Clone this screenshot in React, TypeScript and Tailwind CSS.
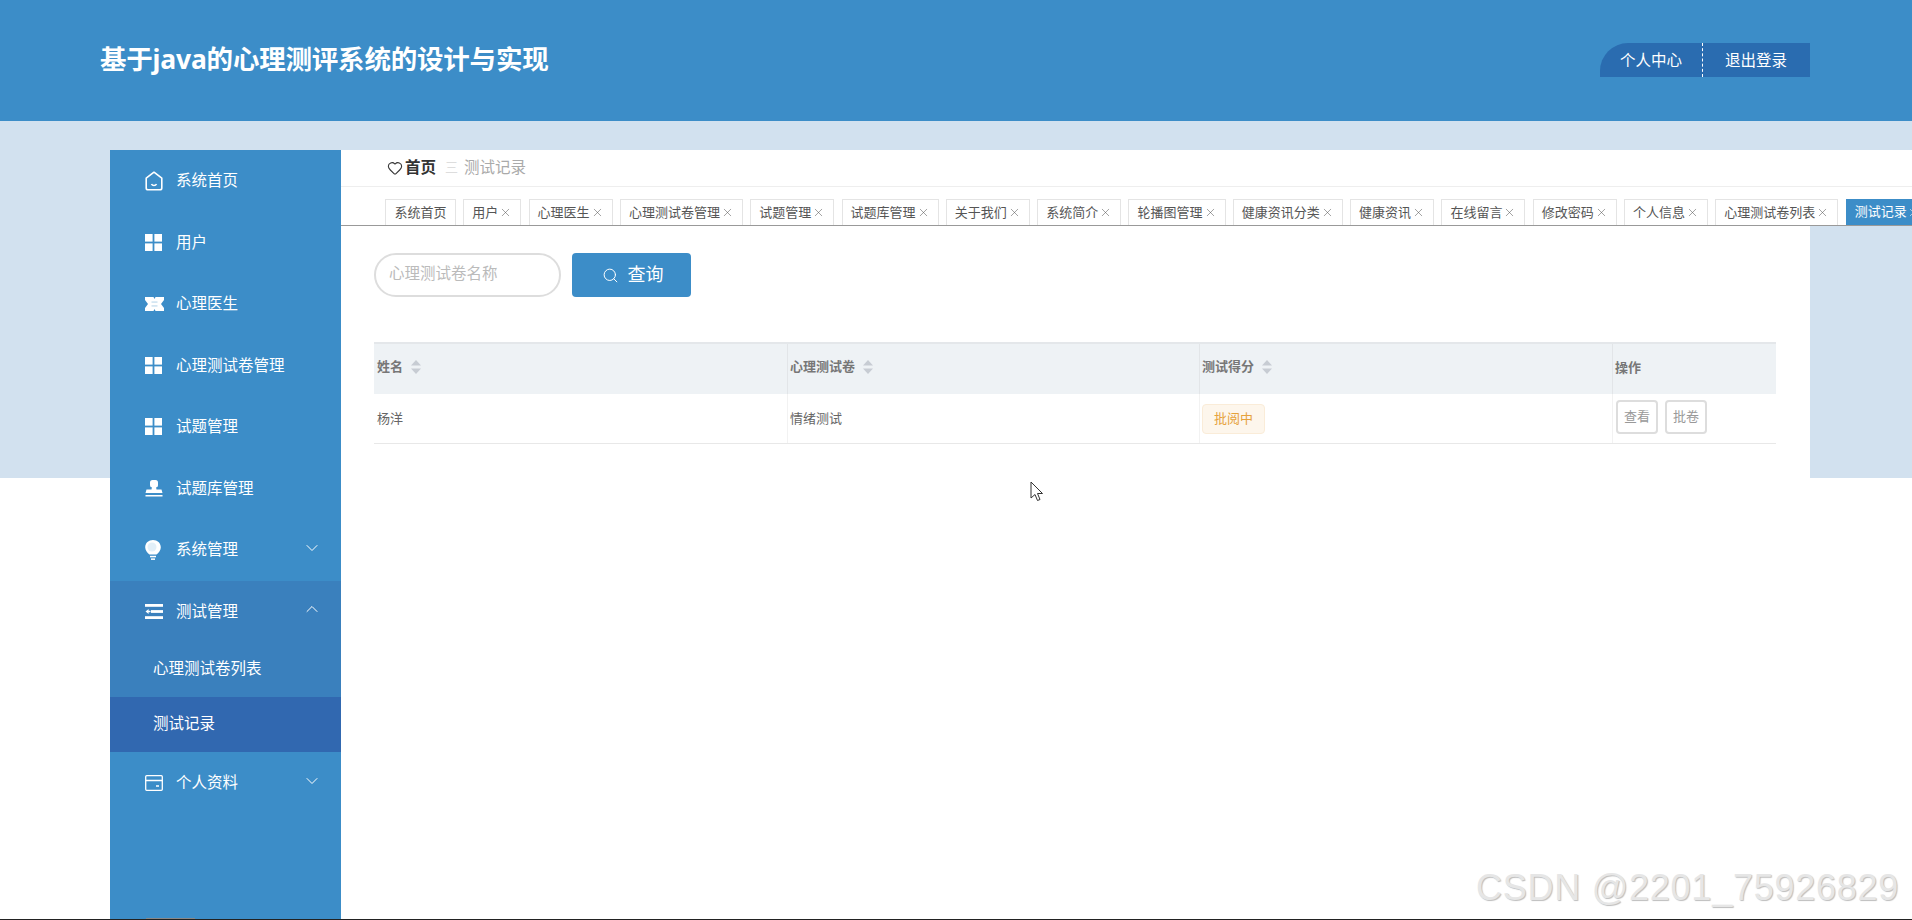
import React from 'react';
import { ChevronDown, ChevronUp, Heart, Search, X } from 'lucide-react';

const GridIcon = () => (
  <svg width="17" height="17" viewBox="0 0 17 17" fill="white">
    <rect x="0" y="0" width="7.6" height="7.6" />
    <rect x="9.4" y="0" width="7.6" height="7.6" />
    <rect x="0" y="9.4" width="7.6" height="7.6" />
    <rect x="9.4" y="9.4" width="7.6" height="7.6" />
  </svg>
);

const HomeIcon = () => (
  <svg width="18" height="20" viewBox="0 0 18 20" fill="none" stroke="white" strokeWidth="1.6">
    <path d="M9 1.2 L16.8 7.2 V17 Q16.8 18.8 15 18.8 H3 Q1.2 18.8 1.2 17 V7.2 Z" strokeLinejoin="round" />
    <path d="M6.5 13 C7.5 15 10.5 15 11.5 13" />
  </svg>
);

const TicketIcon = () => (
  <svg width="19" height="14" viewBox="0 0 19 14" fill="white">
    <path d="M0 0 H19 V3 L16 7 L19 11 V14 H0 V11 L3 7 L0 3 Z" />
    <path d="M8.5 0 H10.5 L9.5 2 Z M8.5 14 H10.5 L9.5 12 Z" fill="#3c8dc8" />
    <rect x="6.5" y="4.6" width="6" height="0.9" fill="#a9cde6" />
    <rect x="6.5" y="8.5" width="6" height="0.9" fill="#a9cde6" />
  </svg>
);

const StampIcon = () => (
  <svg width="18" height="17" viewBox="0 0 18 17" fill="white">
    <rect x="5" y="0" width="8" height="7.5" rx="2.5" />
    <path d="M7 7 H11 L11.5 9.5 H16.5 L17.5 13 H0.5 L1.5 9.5 H6.5 Z" />
    <rect x="0.5" y="15" width="17" height="1.5" />
  </svg>
);

const BulbIcon = () => (
  <svg width="16" height="20" viewBox="0 0 16 20" fill="white">
    <path d="M8 0 C12.4 0 15.8 3 15.8 7.4 C15.8 10.4 13.5 12.6 11.5 14.6 H4.5 C2.5 12.6 0.2 10.4 0.2 7.4 C0.2 3 3.6 0 8 0 Z" />
    <ellipse cx="7" cy="7" rx="4.5" ry="4.5" fill="#e2eff8" />
    <rect x="5" y="15.8" width="6" height="1.5" />
    <rect x="6" y="18.4" width="4" height="1.5" />
  </svg>
);

const ListIcon = () => (
  <svg width="18" height="15" viewBox="0 0 18 15" fill="white">
    <rect x="0" y="0" width="18" height="2.8" />
    <rect x="6" y="6.1" width="12" height="2.8" />
    <rect x="0" y="12.2" width="18" height="2.8" />
    <path d="M0.5 7.5 L3.6 5 V6.8 H5.5 V8.2 H3.6 V10 Z" />
  </svg>
);

const CardIcon = () => (
  <svg width="18" height="16" viewBox="0 0 18 16" fill="none" stroke="white" strokeWidth="1.3">
    <rect x="0.7" y="0.7" width="16.6" height="14.6" rx="1" />
    <path d="M0.7 5.5 H17.3 M11 11 H14" />
  </svg>
);

const SortCarets = () => (
  <svg width="10" height="14" viewBox="0 0 10 14" fill="#c7ccd3" className="ml-2">
    <path d="M5 0 L10 5.5 H0 Z" />
    <path d="M5 14 L0 8.5 H10 Z" />
  </svg>
);

const menu = [
  { name: '系统首页', icon: <HomeIcon /> },
  { name: '用户', icon: <GridIcon /> },
  { name: '心理医生', icon: <TicketIcon /> },
  { name: '心理测试卷管理', icon: <GridIcon /> },
  { name: '试题管理', icon: <GridIcon /> },
  { name: '试题库管理', icon: <StampIcon /> },
];

const tabs = [
  '用户',
  '心理医生',
  '心理测试卷管理',
  '试题管理',
  '试题库管理',
  '关于我们',
  '系统简介',
  '轮播图管理',
  '健康资讯分类',
  '健康资讯',
  '在线留言',
  '修改密码',
  '个人信息',
  '心理测试卷列表',
];

const MenuRow = ({ name, icon, arrow }: { name: string; icon: React.ReactNode; arrow?: 'up' | 'down' }) => (
  <div className="h-[61.5px] flex items-center pl-[35px] pr-[19px] text-white text-[15.5px]">
    <span className="w-[31px] flex items-center shrink-0">{icon}</span>
    <span>{name}</span>
    {arrow === 'down' && <ChevronDown size={20} strokeWidth={1.2} className="ml-auto -mt-[4px]" />}
    {arrow === 'up' && <ChevronUp size={20} strokeWidth={1.2} className="ml-auto -mt-[4px]" />}
  </div>
);

export default function App() {
  return (
    <div className="relative w-full h-[920px] overflow-hidden bg-white font-['Noto_Sans','Noto_Sans_CJK_SC',sans-serif]">
      {/* light band behind the panels */}
      <div className="absolute left-0 right-0 top-[121px] h-[357px] bg-[#d2e1ef]"></div>

      {/* Header */}
      <header className="relative h-[121px] bg-[#3c8dc8] flex items-center justify-between pl-[100px] pr-[102px]">
        <h1 className="text-white text-[26.5px] font-bold tracking-[-0.2px] -mt-[1px]">基于java的心理测评系统的设计与实现</h1>
        <div className="flex h-[34px] items-stretch bg-[#2a6cb0] rounded-tl-[28px] text-white text-[15.5px] leading-[34px] -mt-[2px]">
          <span className="w-[103px] pl-[20px] border-r border-dashed border-white">个人中心</span>
          <span className="w-[107px] pl-[22px]">退出登录</span>
        </div>
      </header>

      <div className="relative flex pl-[110px] pt-[29px]">
        {/* Sidebar */}
        <aside className="w-[231px] h-[770px] shrink-0 bg-[#3c8dc8]">
          {menu.map((m) => (
            <MenuRow key={m.name} name={m.name} icon={m.icon} />
          ))}
          <MenuRow name="系统管理" icon={<BulbIcon />} arrow="down" />
          <div className="bg-[#3a80bd]">
            <MenuRow name="测试管理" icon={<ListIcon />} arrow="up" />
            <div className="h-[55px] flex items-center pl-[43px] pb-[2px] text-white text-[15.5px]">心理测试卷列表</div>
            <div className="h-[55px] flex items-center pl-[43px] pb-[2px] text-white text-[15.5px] bg-[#3168b0]">测试记录</div>
          </div>
          <MenuRow name="个人资料" icon={<CardIcon />} arrow="down" />
        </aside>

        {/* Main */}
        <main className="flex-1 min-w-0 overflow-hidden">
          <div className="bg-white">
            <div className="h-[37px] border-b border-[#eeeeee] flex items-center pl-[46px] text-[15.5px]">
              <Heart size={16} strokeWidth={1.6} className="text-[#333333] mr-[2px]" />
              <span className="font-bold text-[#333333]">首页</span>
              <span className="ml-[9px] mr-[6px] text-[#dddddd] text-[13px]">三</span>
              <span className="text-[#aaaaaa]">测试记录</span>
            </div>
            <div className="h-[39px] border-b border-[#999999] flex items-end gap-[7.3px] pl-[44px] text-[13px] text-[#555555]">
              <div className="w-[71px] h-[26px] border border-b-0 border-[#e4e4e4] flex items-center justify-center shrink-0">系统首页</div>
              {tabs.map((t) => (
                <div key={t} className="h-[26px] px-[8px] border border-b-0 border-[#e4e4e4] flex items-center shrink-0">
                  {t}
                  <span className="w-[14px] flex justify-end">
                    <X size={13} strokeWidth={1} className="text-[#555555]" />
                  </span>
                </div>
              ))}
              <div className="h-[26px] px-[9px] bg-[#3c8dc8] text-white flex items-center shrink-0">
                测试记录
                <span className="w-[14px] flex justify-start">
                  <X size={13} strokeWidth={1} />
                </span>
              </div>
            </div>
          </div>

          <div className="w-[1469px] h-[694px] bg-white pl-[33px] pt-[27px]">
            {/* Search */}
            <div className="flex items-center gap-[11px] h-[44px]">
              <div className="w-[187px] h-[44px] rounded-full border-2 border-[#dddddd] flex items-center pl-[13px] pb-[2px] text-[15.5px] text-[#bbbbbb]">
                心理测试卷名称
              </div>
              <button className="w-[119px] h-[44px] rounded-[4px] bg-[#3c8dc8] text-white text-[18px] flex items-center justify-center gap-[9px]">
                <Search size={17} strokeWidth={1.4} />
                <span className="-mt-[2px] mr-[-2px]">查询</span>
              </button>
            </div>

            {/* Table */}
            <div className="w-[1402px] mt-[45px] text-[13px]">
              <div className="flex h-[52px] bg-[#eef2f5] border-t-2 border-[#e4e7ea] font-bold text-[#777777]">
                <div className="w-[413px] flex items-center pl-[3px] pb-[4px]">姓名<SortCarets /></div>
                <div className="w-[412px] flex items-center pl-[2px] pb-[4px] border-l border-[#e2e5e8]">心理测试卷<SortCarets /></div>
                <div className="w-[413px] flex items-center pl-[2px] pb-[4px] border-l border-[#e2e5e8]">测试得分<SortCarets /></div>
                <div className="w-[164px] flex items-center pl-[2px] pb-[3px] border-l border-[#e2e5e8]">操作</div>
              </div>
              <div className="flex h-[50px] border-b border-[#e8e8e8] text-[#666666]">
                <div className="w-[413px] flex items-center pl-[3px] pt-[1px]">杨洋</div>
                <div className="w-[412px] flex items-center pl-[2px] pt-[1px] border-l border-[#f2f2f2]">情绪测试</div>
                <div className="w-[413px] flex items-center pl-[2px] border-l border-[#f2f2f2]">
                  <span className="w-[63px] h-[30px] rounded-[4px] border border-[#faecd8] bg-[#fdf6ec] text-[#e6a23c] flex items-center justify-center">批阅中</span>
                </div>
                <div className="w-[164px] flex items-start pt-[6px] pl-[3px] gap-[7px] border-l border-[#f2f2f2] text-[#999999]">
                  <span className="w-[42px] h-[34px] rounded-[4px] border-2 border-[#dddddd] flex items-center justify-center">查看</span>
                  <span className="w-[42px] h-[34px] rounded-[4px] border-2 border-[#dddddd] flex items-center justify-center">批卷</span>
                </div>
              </div>
            </div>
          </div>
        </main>
      </div>

      {/* mouse pointer */}
      <svg className="absolute left-[1030px] top-[481px]" width="14" height="21" viewBox="0 0 14 21" fill="white" stroke="#333333" strokeWidth="1">
        <path d="M1 1 V17 L5 13.5 L7.5 19.5 L10 18.5 L7.5 12.5 H12.5 Z" />
      </svg>

      {/* watermark */}
      <div className="absolute left-[1476px] top-[868px] text-[36px] leading-[40px] tracking-[0.75px] whitespace-nowrap text-[#e6e6e6] font-['Liberation_Sans',sans-serif] [text-shadow:1px_1px_1px_#bdbdbd]">
        CSDN @2201_75926829
      </div>

      {/* bottom edge of the captured window */}
      <div className="absolute left-0 right-0 bottom-0 h-[1px] bg-[#222222]"></div>
      <div className="absolute left-[146px] bottom-[1px] w-[49px] h-[1px] bg-[#888888]"></div>
    </div>
  );
}
